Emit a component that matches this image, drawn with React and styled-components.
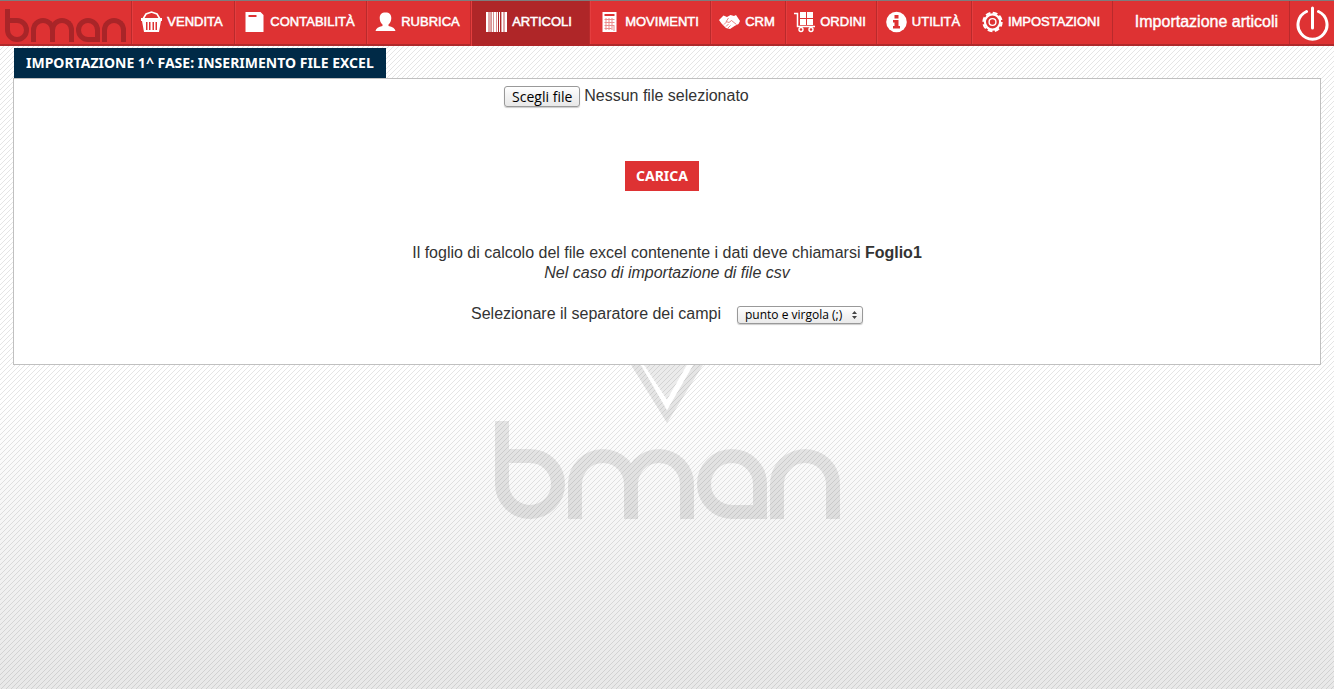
import React, { useRef } from 'react'
import styled, { createGlobalStyle } from 'styled-components';

const stripes = "data:image/svg+xml,%3Csvg xmlns='http://www.w3.org/2000/svg' width='5' height='5' shape-rendering='crispEdges'%3E%3Cpath fill='%23000' fill-opacity='.1' d='M4 0h1v1H4zM3 1h1v1H3zM2 2h1v1H2zM1 3h1v1H1zM0 4h1v1H0z'/%3E%3C/svg%3E";

const GlobalStyle = createGlobalStyle`
	* {
		box-sizing: border-box;
	}

	html {
		min-height: 100%;
		background: url("${stripes}"), linear-gradient(#fff 0, #fff 58%, #e8e8e8 100%);
	}

	body {
		margin: 0;
		color: #333;
		font: 16px/20px "Liberation Sans", Arial, sans-serif;
	}
`;

/* navigation */

const Nav = styled.nav`
	display: flex;
	height: 46px;
	background: #de3233;
	border-top: 1px solid #7d7d7d;
	border-bottom: 2px solid #b02a2c;
	color: #fff;
`;

const LogoLink = styled.a`
	display: flex;
	align-items: flex-end;
	width: 131px;
	padding: 0 0 2px 5px;
`;

const NavLink = styled.a`
	display: flex;
	align-items: center;
	justify-content: center;
	gap: 5px;
	flex: 0 0 ${props => props.$width}px;
	border-left: 1px solid #b92a2c;
	box-shadow: inset 1px 0 #e43e3f;
	margin-bottom: ${props => props.$active ? '-2px' : '0'};
	background: ${props => props.$active ? '#af2628' : 'transparent'};
	color: #fff;
	font-size: 13px;
	-webkit-text-stroke: 0.5px #fff;
	text-decoration: none;
	white-space: nowrap;
	padding: 0 2px ${props => props.$active ? '3px' : '1px'} 0;
`;

const PageName = styled.div`
	flex: 1;
	padding: 11px 11px 0 0;
	border-left: 1px solid #b92a2c;
	-webkit-text-stroke: 0.4px #fff;
	text-align: right;
	white-space: nowrap;
`;

const PowerButton = styled.button`
	flex: 0 0 45px;
	padding: 3px 0 0 1px;
	border: 0;
	border-left: 1px solid #b92a2c;
	background: none;
	color: #fff;
	cursor: pointer;
`;

/* wordmark, built out of bordered boxes */

const Mark = styled.div`
	display: flex;
	align-items: flex-end;
	gap: ${props => props.$gap}px;
	color: ${props => props.$color};
	opacity: ${props => props.$opacity || 1};

	span {
		display: block;
		width: ${props => props.$size}px;
		height: ${props => props.$size}px;
		border: ${props => props.$stroke}px solid currentColor;
	}
`;

const Bowl = styled.span`
	border-radius: ${props => props.$flip ? '50% 50% 0 50%' : '0 50% 50% 50%'};
`;

const Stem = styled.i`
	display: block;
	width: ${props => props.$width}px;
	height: ${props => props.$height}px;
	background: currentColor;
`;

const Arch = styled.span`
	&& {
		border-bottom: 0;
		border-radius: 50% 50% 0 0;
	}
`;

const Arches = styled.div`
	display: flex;

	span + span {
		margin-left: -${props => props.$stroke}px;
	}
`;

const Wordmark = ({ size, stroke, stem, gap, color, opacity }) => (
	<Mark $size={size} $stroke={stroke} $gap={gap} $color={color} $opacity={opacity}>
		<div>
			<Stem $width={stroke} $height={stem} />
			<Bowl />
		</div>
		<Arches $stroke={stroke}>
			<Arch />
			<Arch />
		</Arches>
		<Bowl $flip />
		<Arch />
	</Mark>
)

/* content */

const Content = styled.main`
	padding: 2px 13px 0;
`;

const Title = styled.h1`
	width: fit-content;
	margin: 0 0 0 1px;
	padding: 0 12px;
	background: #002a47;
	color: #fff;
	font: bold 14px/30px "Noto Sans", Verdana, sans-serif;
`;

const Panel = styled.form`
	display: flex;
	flex-direction: column;
	align-items: center;
	padding: 7px 0 40px;
	border: 1px solid #c0c0c0;
	background: #fff;
`;

const FileRow = styled.div`
	display: flex;
	gap: 4px;
	margin-right: 81px;
`;

const FileButton = styled.button`
	width: 76px;
	height: 21px;
	padding: 0;
	border: 1px solid #999;
	border-radius: 3px;
	background: linear-gradient(#fff, #f2f2f2 50%, #e8e8e8);
	box-shadow: 0 1px 1px #ccc;
	color: #000;
	font: 14px/19px "Open Sans", sans-serif;
`;

const Submit = styled.button`
	height: 30px;
	margin: 54px 10px 52px 0;
	padding: 0 11px;
	border: 0;
	background: #de3233;
	color: #fff;
	font: bold 14px/30px "Noto Sans", Verdana, sans-serif;
	cursor: pointer;
`;

const Note = styled.p`
	margin: 0 0 21px;
	text-align: center;
`;

const SelectRow = styled.div`
	display: flex;
	gap: 16px;
`;

const SelectBox = styled.div`
	display: grid;
	align-items: center;
	height: 18px;
	margin-top: 2px;

	> * {
		grid-area: 1 / 1;
	}

	svg {
		justify-self: end;
		margin-right: 6px;
		pointer-events: none;
	}
`;

const Select = styled.select`
	width: 126px;
	height: 18px;
	padding: 0 7px;
	appearance: none;
	border: 1px solid #999;
	border-radius: 3px;
	background: linear-gradient(#fff, #f4f4f4 50%, #eaeaea);
	box-shadow: 0 1px 1px #ccc;
	color: #000;
	font: 12px/16px "Open Sans", sans-serif;
`;

const Watermark = styled.div`
	display: flex;
	flex-direction: column;
	align-items: center;

	> svg {
		display: block;
		overflow: visible;
	}
`;

const Icon = ({ children, width = 20 }) => (
	<svg width="21" height="22" viewBox={`0 0 ${width} 22`} fill="#fff" aria-hidden="true">{children}</svg>
)

const Basket = () => (
	<Icon width={21}>
		<path d="M2 8 5 3 10.500 1 16 3 19 8" fill="none" stroke="#fff" strokeWidth="1.600" />
		<path fillRule="evenodd" d="M0 7h21v3h-1l-2 11H3L1 10H0zM5 11v8h1.500v-8zM8 11v8h1.500v-8zM11.500 11v8H13v-8zM14.500 11v8H16v-8z" />
	</Icon>
)

const Book = () => (
	<Icon width={18}>
		<path fillRule="evenodd" d="M0 1h15l3 3v17H0zM3 4v2h8V4z" />
	</Icon>
)

const Person = () => (
	<Icon>
		<path d="M10 1.500c4 0 5.800 2 5.800 5.500 0 2.500-1 5-2.800 6.500v1.500c4 .8 6.500 2.500 7 5H0c.5-2.500 3-4.200 7-5v-1.500C5.200 12 4.200 9.500 4.200 7c0-3.500 1.800-5.500 5.800-5.500z" />
	</Icon>
)

const Barcode = () => (
	<Icon width={21}>
		<path opacity=".6" d="M0 1h5v20H0zM15 1h6v20h-6z" />
		<path d="M0 1h2v20H0zM6 1h1v20H6zM8 1h2v20H8zM11 1h1v20h-1zM13 1h1v20h-1zM16 1h1v20h-1zM19 1h2v20h-2z" />
		<path opacity=".5" d="M5 1h6v20H5z" />
	</Icon>
)

const Calculator = () => (
	<Icon width={14}>
		<path fillRule="evenodd" d="M0 1h14v20H0zM2 3v2h10V3z" />
		<path stroke="#de3233" strokeWidth="1" opacity=".55" d="M2 8.500h10M2 11.500h10M2 14.500h10M2 17.500h7M3.500 7v12M6.500 7v12M9.500 7v12M11.500 15v5" />
	</Icon>
)

const Hands = () => (
	<Icon width={21}>
		<path d="M0 9 4.500 4.500 8 6l3.500-2L15 5l2-1 4 6-1.500 3-4 2-4.500 3-4-1-4.500-4.500z" />
		<path fill="none" stroke="#de3233" strokeWidth=".6" d="m9.500 7-2.300 3.500 2.800 1 2.500-2 5 4M5 13.500l2.500-2.500M7 15.500l2.500-2.500M9 17l2.500-2.500" />
	</Icon>
)

const Trolley = () => (
	<Icon width={21}>
		<path d="M6 1h6v6H6zM13 1h6v6h-6zM6 8h6v6H6zM13 8h6v6h-6z" />
		<path fill="none" stroke="#fff" strokeWidth="1.500" d="M0 2.500h3.500v13H21" />
		<g fill="none" stroke="#fff" strokeWidth="1.400">
			<circle cx="7" cy="18.500" r="2" />
			<circle cx="17" cy="18.500" r="2" />
		</g>
	</Icon>
)

const Info = () => (
	<Icon width={21}>
		<circle cx="10.500" cy="11" r="10.300" />
		<path fill="#de3233" d="M8.500 4h4v3.500h-4zM7 9h5.500v6H14v2.500H7V15h1.500v-3.500H7z" />
	</Icon>
)

const Gear = () => (
	<Icon width={21}>
		<g fill="none" stroke="#fff">
			<circle cx="10.500" cy="11" r="7.600" strokeWidth="2.200" />
			<circle cx="10.500" cy="11" r="9.200" strokeWidth="2" strokeDasharray="4.800 2.425" />
			<circle cx="10.500" cy="11" r="3.400" strokeWidth="1.400" />
		</g>
	</Icon>
)

const items = [
	{ label: 'VENDITA', icon: Basket, width: 103 },
	{ label: 'CONTABILITÀ', icon: Book, width: 132 },
	{ label: 'RUBRICA', icon: Person, width: 104 },
	{ label: 'ARTICOLI', icon: Barcode, width: 119, active: true },
	{ label: 'MOVIMENTI', icon: Calculator, width: 121 },
	{ label: 'CRM', icon: Hands, width: 75 },
	{ label: 'ORDINI', icon: Trolley, width: 91 },
	{ label: 'UTILITÀ', icon: Info, width: 95 },
	{ label: 'IMPOSTAZIONI', icon: Gear, width: 141 },
]

const App = () => {
	const fileInput = useRef(null);

	return (
		<>
			<GlobalStyle />
			<Nav>
				<LogoLink href="#" aria-label="bman">
					<Wordmark size={24} stroke={5} stem={9} gap={2} color="#a92528" />
				</LogoLink>
				{items.map(({ label, icon: ItemIcon, width, active }) => (
					<NavLink key={label} href="#" $width={width} $active={active}>
						<ItemIcon />
						{label}
					</NavLink>
				))}
				<PageName>Importazione articoli</PageName>
				<PowerButton type="button" aria-label="Esci">
					<svg width="34" height="36" viewBox="0 0 34 36" fill="none" stroke="#fff" strokeWidth="3" strokeLinecap="round">
						<path d="M10.500 6.500A14.500 14.500 0 1 0 22.500 6.500M16.500 3v20" />
					</svg>
				</PowerButton>
			</Nav>
			<Content>
				<Title>IMPORTAZIONE 1^ FASE: INSERIMENTO FILE EXCEL</Title>
				<Panel onSubmit={e => e.preventDefault()}>
					<FileRow>
						<input ref={fileInput} type="file" id="file" hidden />
						<FileButton type="button" onClick={() => fileInput.current.click()}>Scegli file</FileButton>
						<label htmlFor="file">Nessun file selezionato</label>
					</FileRow>
					<Submit type="submit">CARICA</Submit>
					<Note>
						Il foglio di calcolo del file excel contenente i dati deve chiamarsi <b>Foglio1</b>
						<br />
						<em>Nel caso di importazione di file csv</em>
					</Note>
					<SelectRow>
						<label htmlFor="separator">Selezionare il separatore dei campi</label>
						<SelectBox>
							<Select id="separator">
								<option>punto e virgola (;)</option>
							</Select>
							<svg width="5" height="8" viewBox="0 0 5 8" fill="#444"><path d="M0 3 2.500 0 5 3zM0 5l2.500 3L5 5z" /></svg>
						</SelectBox>
					</SelectRow>
				</Panel>
			</Content>
			<Watermark>
				<svg width="72" height="56" viewBox="0 0 72 56" fill="#000">
					<path opacity=".1" d="M0 0h10l26 45L62 0h10L36 58z" />
					<path opacity=".08" d="M13 0h43L36 35z" />
					<path fill="#fff" d="M10 0h3l23 35L56 0h6L36 45z" />
				</svg>
				<Wordmark size={70} stroke={14} stem={28} gap={3} color="#000" opacity={0.09} />
			</Watermark>
		</>
	)
}

export default App;
